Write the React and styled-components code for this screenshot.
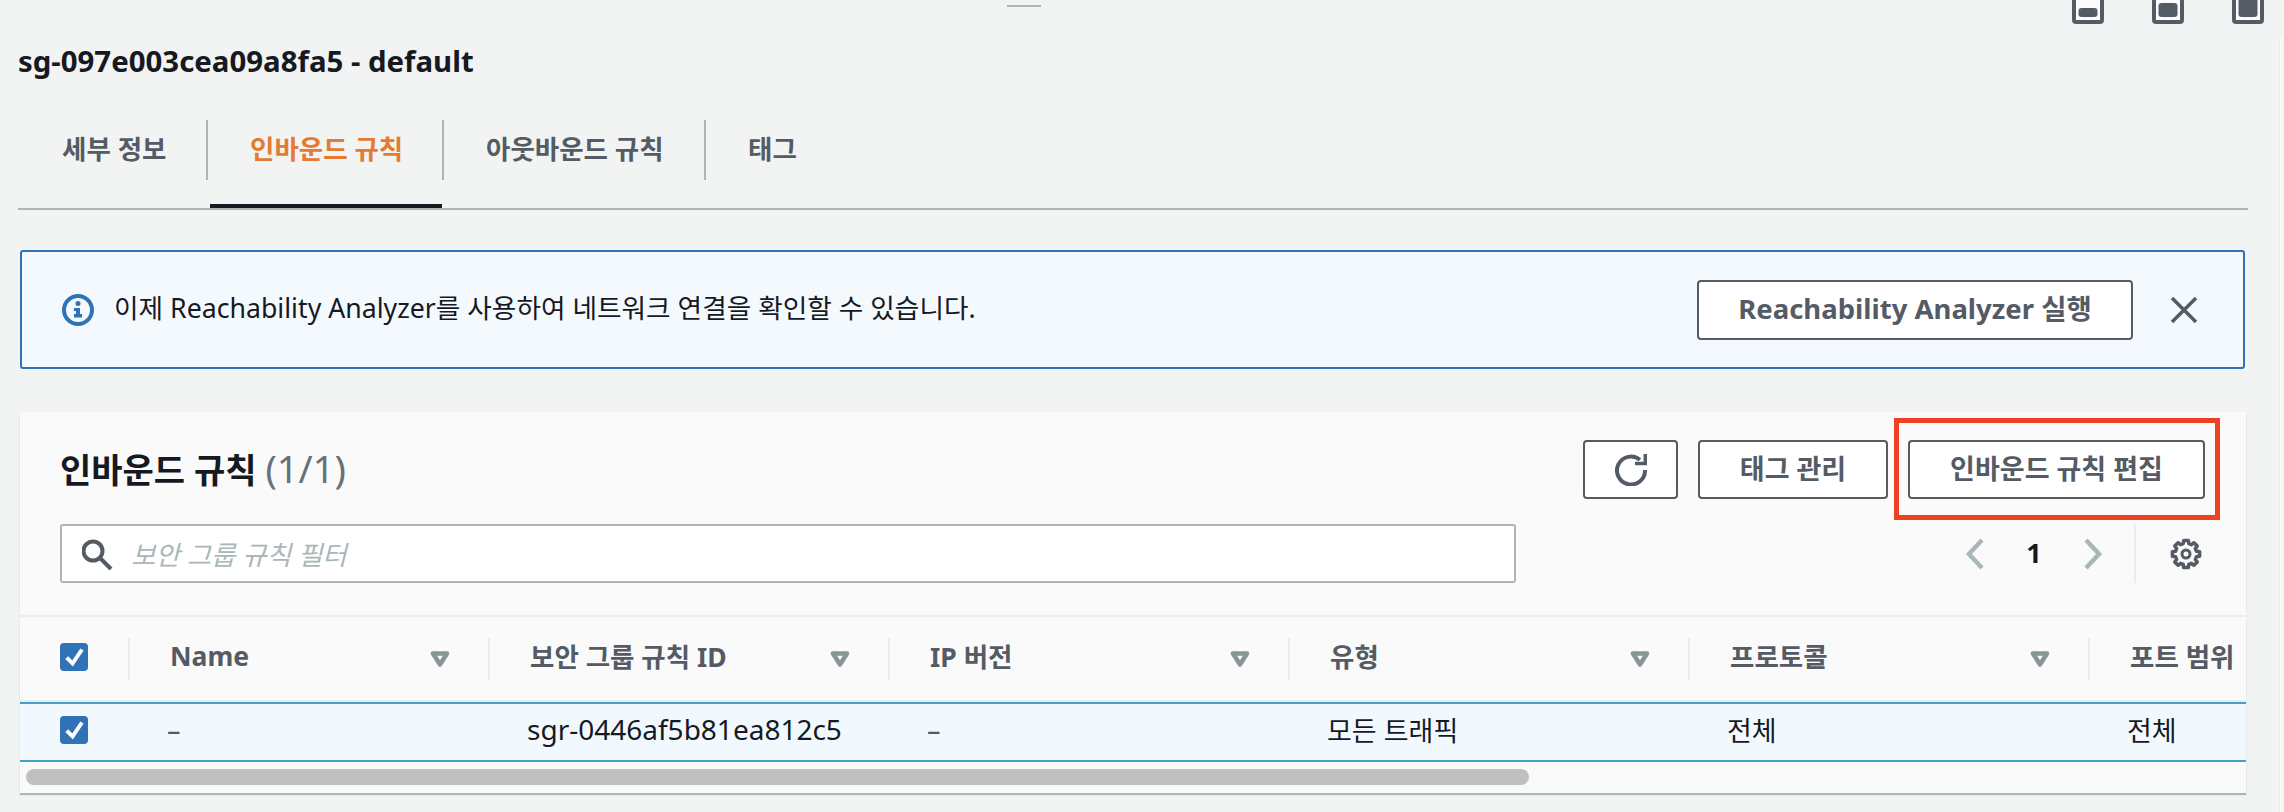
import React from "react";
import styled, { createGlobalStyle } from "styled-components";

const Global = createGlobalStyle`
  html, body { margin: 0; padding: 0; background: #f2f3f3; }
  body { font-family: "Noto Sans", "Noto Sans CJK KR", sans-serif; color: #16191f; }
  * { box-sizing: border-box; }
`;

const Page = styled.div`
  width: 2284px;
  height: 812px;
  overflow: hidden;
  position: relative;
  background: #f2f3f3;
`;
const TopBar = styled.div`
  display: flex;
  height: 24px;
  padding-right: 20px;
`;
const Handle = styled.div`
  width: 34px;
  height: 2px;
  margin: 5px 0 0 1007px;
  background: #aab7b8;
`;
const PanelIcons = styled.div`
  display: flex;
  gap: 48px;
  margin-left: auto;
`;
const EdgeLine = styled.div`
  position: absolute;
  top: 38px;
  right: 2px;
  bottom: 0;
  width: 3px;
  background: #fbfbfb;
  border-left: 1px solid #e9ebeb;
`;
const Title = styled.h1`
  margin: 0;
  padding: 19px 0 0 18px;
  height: 96px;
  font-size: 29.4px;
  line-height: 36px;
  font-weight: 700;
`;
const Tabs = styled.div`
  display: flex;
  margin: 0 36px 0 18px;
  height: 90px;
  border-bottom: 2px solid #aab7b8;
`;
const Tab = styled.div`
  position: relative;
  width: ${(p) => p.$w}px;
  height: 60px;
  padding: 0 0 5px ${(p) => p.$pad}px;
  display: flex;
  align-items: center;
  font-size: 26.5px;
  font-weight: 700;
  color: ${(p) => (p.$active ? "#e57a30" : "#545b64")};
  border-right: ${(p) => (p.$last ? "none" : "2px solid #aab7b8")};
  ${(p) =>
    p.$active &&
    `&::after {
      content: "";
      position: absolute;
      left: 2px;
      right: 0;
      top: 84px;
      height: 4px;
      background: #16191f;
    }`}
`;
const Flash = styled.div`
  display: flex;
  align-items: center;
  margin: 40px 39px 0 20px;
  height: 119px;
  padding: 0 45px 0 40px;
  background: #f4f9fe;
  border: 2px solid #2f72b6;
  border-radius: 3px;
`;
const FlashText = styled.div`
  margin: 0 0 6px 20px;
  font-size: 26.7px;
  color: #16191f;
`;
const Button = styled.button`
  height: ${(p) => p.$h || 59}px;
  width: ${(p) => p.$w}px;
  padding: 0 0 5px;
  display: flex;
  align-items: center;
  justify-content: center;
  background: #fff;
  border: 2px solid #545b64;
  border-radius: 4px;
  color: #545b64;
  font-family: inherit;
  font-size: ${(p) => p.$size || 27}px;
  font-weight: 700;
  white-space: nowrap;
`;
const IconButton = styled(Button)`
  padding: 0;
`;
const FlashButton = styled(Button)`
  margin-left: auto;
`;
const Dismiss = styled.div`
  display: flex;
  margin-left: 37px;
  color: #545b64;
`;
const Card = styled.section`
  position: relative;
  margin: 43px 38px 0 20px;
  height: 381px;
  background: #fafafa;
  overflow: hidden;
  box-shadow: 0 2px 1px #aab7b8;
`;
const CardHead = styled.div`
  display: flex;
  align-items: center;
  justify-content: space-between;
  padding: 28px 41px 0 40px;
`;
const Heading = styled.h2`
  margin: 0 0 4px;
  font-size: 34px;
  font-weight: 700;
  color: #16191f;
`;
const Count = styled.span`
  font-size: 38px;
  font-weight: 400;
  color: #687078;
`;
const Actions = styled.div`
  display: flex;
  gap: 20px;
`;
const Annotation = styled.div`
  position: absolute;
  left: 1874px;
  top: 6px;
  width: 326px;
  height: 102px;
  border: 5px solid #ee4023;
`;
const FilterRow = styled.div`
  display: flex;
  align-items: center;
  margin-top: 25px;
  padding-left: 40px;
  height: 59px;
`;
const SearchBox = styled.div`
  display: flex;
  align-items: center;
  width: 1456px;
  height: 59px;
  padding-left: 20px;
  gap: 17px;
  background: #fff;
  border: 2px solid #aab7b8;
  border-radius: 3px;
`;
const Placeholder = styled.span`
  margin-bottom: 1px;
  font-size: 26.5px;
  font-style: italic;
  color: #aab7b8;
`;
const Pager = styled.div`
  display: flex;
  align-items: center;
  margin-left: 449px;
`;
const PageNum = styled.span`
  width: 98px;
  margin-bottom: 3px;
  text-align: center;
  font-size: 27px;
  font-weight: 700;
  color: #16191f;
`;
const Prefs = styled.div`
  display: flex;
  align-items: center;
  height: 59px;
  margin-left: 31px;
  padding-left: 34px;
  border-left: 2px solid #eaeded;
`;
const grid = "110px 360px 400px 400px 400px 400px 400px";
const HeadRow = styled.div`
  display: grid;
  grid-template-columns: ${grid};
  margin-top: 32px;
  height: 87px;
  align-items: center;
  border-top: 2px solid #eaeded;
  border-bottom: 2px solid #eaeded;
`;
const HeadCell = styled.div`
  display: flex;
  align-items: center;
  justify-content: space-between;
  height: 42px;
  padding: 0 38px 0 40px;
  font-size: 26.5px;
  font-weight: 700;
  color: #545b64;
  border-right: ${(p) => (p.$sep ? "2px solid #eaeded" : "none")};
  white-space: nowrap;
`;
const HeadLabel = styled.span`
  margin-bottom: 6px;
`;
const CheckCell = styled.div`
  display: flex;
  align-items: center;
  padding-left: 40px;
  height: 42px;
  border-right: ${(p) => (p.$sep ? "2px solid #eaeded" : "none")};
`;
const Row = styled.div`
  display: grid;
  grid-template-columns: ${grid};
  align-items: center;
  height: 60px;
  background: #f1f9ff;
  border-top: 2px solid #44a0c9;
  border-bottom: 2px solid #44a0c9;
`;
const Cell = styled.div`
  margin-bottom: 6px;
  padding-left: 37px;
  font-size: ${(p) => (p.$latin ? 28 : 27)}px;
  color: ${(p) => (p.$muted ? "#545b64" : "#16191f")};
  white-space: nowrap;
`;
const ScrollTrack = styled.div`
  padding: 7px 0 0 6px;
`;
const ScrollThumb = styled.div`
  width: 1503px;
  height: 16px;
  border-radius: 8px;
  background: #bfbfbf;
`;
const Box = styled.span`
  display: inline-flex;
  width: 28px;
  height: 28px;
  margin-bottom: 4px;
  border-radius: 4px;
  background: #2f72b6;
`;

const PanelIcon = ({ y, h }) => (
  <svg width="32" height="24" viewBox="0 0 32 24">
    <rect x="2" y="-8" width="28" height="30" rx="2" fill="#fbfbfb" stroke="#545b64" strokeWidth="4" />
    <rect x="6.500" y={y} width="19" height={h} rx="3" fill="#545b64" />
  </svg>
);
const Check = () => (
  <Box>
    <svg width="28" height="28" viewBox="0 0 28 28">
      <path d="M6.700 14.700 12.500 20.500 22 6.500" fill="none" stroke="#fff" strokeWidth="4" />
    </svg>
  </Box>
);
const Caret = () => (
  <svg width="20" height="16" viewBox="0 0 20 16">
    <path d="M3 2.500H17L10 13.500Z" fill="none" stroke="#879596" strokeWidth="4.500" strokeLinejoin="round" />
  </svg>
);
const InfoIcon = () => (
  <svg width="32" height="32" viewBox="0 0 32 32">
    <circle cx="16" cy="16" r="14" fill="none" stroke="#2f72b6" strokeWidth="4" />
    <circle cx="16" cy="9.500" r="2.500" fill="#2f72b6" />
    <path d="M12 14H18V20H20V23.500H12V20H14V17H12Z" fill="#2f72b6" />
  </svg>
);
const CloseIcon = () => (
  <svg width="28" height="28" viewBox="0 0 28 28">
    <path d="M2 2 26 26M26 2 2 26" stroke="#545b64" strokeWidth="3.500" fill="none" />
  </svg>
);
const RefreshIcon = () => (
  <svg width="32" height="32" viewBox="0 0 32 32">
    <path d="M25 5.800A14 14 0 1 0 30 16" fill="none" stroke="#545b64" strokeWidth="4" />
    <path d="M20 9.500H30.300V0" fill="none" stroke="#545b64" strokeWidth="3.500" />
  </svg>
);
const SearchIcon = () => (
  <svg width="32" height="32" viewBox="0 0 32 32">
    <circle cx="11" cy="13" r="9.500" fill="none" stroke="#545b64" strokeWidth="4" />
    <path d="M18 20 29 31" stroke="#545b64" strokeWidth="4" fill="none" />
  </svg>
);
const Chevron = ({ left }) => (
  <svg width="20" height="32" viewBox="0 0 20 32">
    <path d={left ? "M17 2 4 16 17 30" : "M3 2 16 16 3 30"} fill="none" stroke="#aab7b8" strokeWidth="4.500" />
  </svg>
);
const gearPath = (() => {
  const pts = [];
  for (let i = 0; i < 8; i++) {
    const a = (i * Math.PI) / 4;
    [
      [-0.26, 10.8],
      [-0.17, 13.8],
      [0.17, 13.8],
      [0.26, 10.8],
    ].forEach(([d, r]) => {
      pts.push(`${(16 + r * Math.sin(a + d)).toFixed(2)} ${(16 - r * Math.cos(a + d)).toFixed(2)}`);
    });
  }
  return `M${pts.join("L")}Z`;
})();
const GearIcon = () => (
  <svg width="32" height="32" viewBox="0 0 32 32">
    <path d={gearPath} fill="none" stroke="#545b64" strokeWidth="3.500" strokeLinejoin="round" />
    <circle cx="16" cy="16" r="4" fill="none" stroke="#545b64" strokeWidth="3" />
  </svg>
);

const headers = [
  { label: "Name", caret: true },
  { label: "보안 그룹 규칙 ID", caret: true },
  { label: "IP 버전", caret: true },
  { label: "유형", caret: true },
  { label: "프로토콜", caret: true },
  { label: "포트 범위", caret: false },
];
const cells = [
  { text: "–", muted: true },
  { text: "sgr-0446af5b81ea812c5", latin: true },
  { text: "–", muted: true },
  { text: "모든 트래픽" },
  { text: "전체" },
  { text: "전체" },
];
const tabs = [
  { label: "세부 정보", w: 190, pad: 44 },
  { label: "인바운드 규칙", w: 236, pad: 42, active: true },
  { label: "아웃바운드 규칙", w: 262, pad: 42 },
  { label: "태그", w: 200, pad: 42, last: true },
];

export default function App() {
  return (
    <Page>
      <Global />
      <TopBar>
        <Handle />
        <PanelIcons>
          <PanelIcon y={8} h={9} />
          <PanelIcon y={3} h={14} />
          <PanelIcon y={-6} h={23} />
        </PanelIcons>
      </TopBar>
      <EdgeLine />
      <Title>sg-097e003cea09a8fa5 - default</Title>
      <Tabs>
        {tabs.map((t) => (
          <Tab key={t.label} $w={t.w} $pad={t.pad} $active={t.active} $last={t.last}>
            {t.label}
          </Tab>
        ))}
      </Tabs>
      <Flash>
        <InfoIcon />
        <FlashText>이제 Reachability Analyzer를 사용하여 네트워크 연결을 확인할 수 있습니다.</FlashText>
        <FlashButton $w={436} $h={60} $size={27.5}>
          Reachability Analyzer 실행
        </FlashButton>
        <Dismiss>
          <CloseIcon />
        </Dismiss>
      </Flash>
      <Card>
        <CardHead>
          <Heading>
            인바운드 규칙 <Count>(1/1)</Count>
          </Heading>
          <Actions>
            <IconButton $w={95}>
              <RefreshIcon />
            </IconButton>
            <Button $w={190}>태그 관리</Button>
            <Button $w={297}>인바운드 규칙 편집</Button>
          </Actions>
        </CardHead>
        <Annotation />
        <FilterRow>
          <SearchBox>
            <SearchIcon />
            <Placeholder>보안 그룹 규칙 필터</Placeholder>
          </SearchBox>
          <Pager>
            <Chevron left />
            <PageNum>1</PageNum>
            <Chevron />
          </Pager>
          <Prefs>
            <GearIcon />
          </Prefs>
        </FilterRow>
        <HeadRow>
          <CheckCell $sep>
            <Check />
          </CheckCell>
          {headers.map((h) => (
            <HeadCell key={h.label} $sep={h.caret}>
              <HeadLabel>{h.label}</HeadLabel>
              {h.caret && <Caret />}
            </HeadCell>
          ))}
        </HeadRow>
        <Row>
          <CheckCell>
            <Check />
          </CheckCell>
          {cells.map((c, i) => (
            <Cell key={i} $latin={c.latin} $muted={c.muted}>
              {c.text}
            </Cell>
          ))}
        </Row>
        <ScrollTrack>
          <ScrollThumb />
        </ScrollTrack>
      </Card>
    </Page>
  );
}
